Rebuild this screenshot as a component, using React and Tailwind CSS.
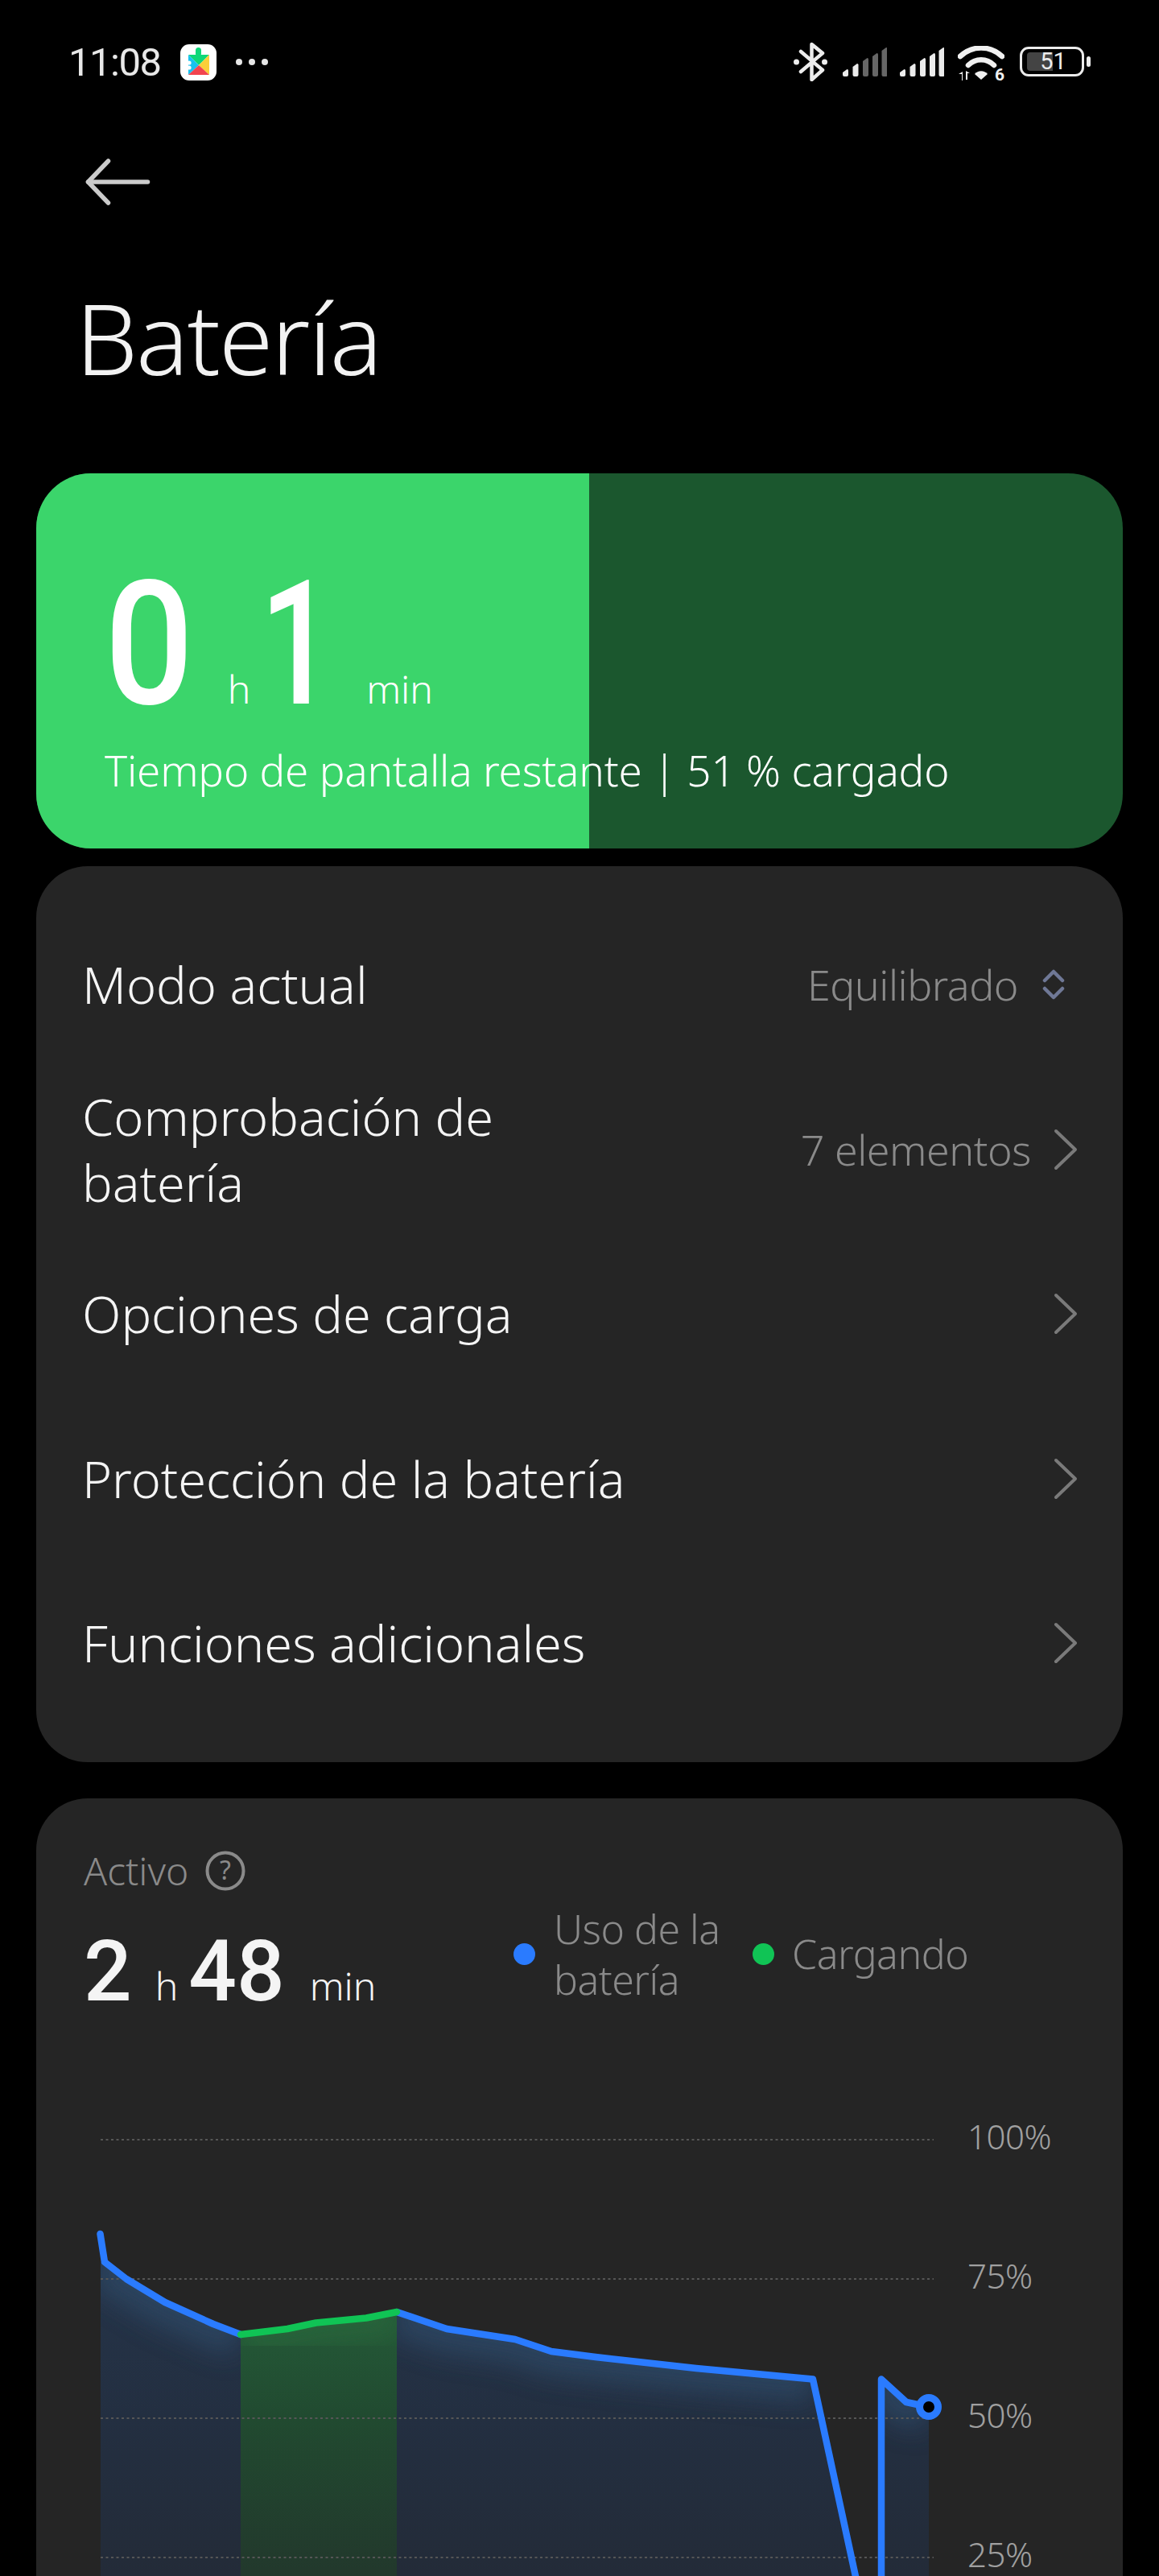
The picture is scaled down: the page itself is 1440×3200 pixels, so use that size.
const rows = [
  { label: ["Modo actual"], value: "Equilibrado", icon: "updown" },
  { label: ["Comprobación de", "batería"], value: "7 elementos", icon: "chevron" },
  { label: ["Opciones de carga"], icon: "chevron" },
  { label: ["Protección de la batería"], icon: "chevron" },
  { label: ["Funciones adicionales"], icon: "chevron" },
];

const signalBars = [
  { x: 0, top: 27 },
  { x: 12.5, top: 20 },
  { x: 25, top: 13 },
  { x: 37, top: 7 },
  { x: 48.5, top: 0 },
];

const chartLabels = [
  { text: "100%", className: "top-[-13px]" },
  { text: "75%", className: "top-[160px]" },
  { text: "50%", className: "top-[333px]" },
  { text: "25%", className: "top-[506px]" },
];

function PlayServicesIcon() {
  return (
    <svg width="45" height="45" viewBox="0 0 45 45">
      <rect width="45" height="45" rx="11" fill="#fff" />
      <rect x="19" y="4" width="7" height="11" rx="3.5" fill="#0ed878" />
      <path d="M10 13h26L23 26z" fill="#0ed878" />
      <path d="M10 13l13 13-13 12z" fill="#18c2ef" />
      <path d="M36 13v25L23 26z" fill="#fbcf3a" />
      <path d="M10 38l13-12 13 12z" fill="#f2444f" />
      <circle cx="11" cy="23" r="2.6" fill="#fff" />
      <circle cx="11" cy="29" r="2.6" fill="#fff" />
    </svg>
  );
}

function SignalIcon({ lit }) {
  return (
    <svg width="55" height="36" viewBox="0 0 55 36">
      {signalBars.map((bar, i) => (
        <path
          key={bar.x}
          d={`M${bar.x} ${bar.top + 4}L${bar.x + 5.5} ${bar.top}Q${bar.x + 7} ${bar.top} ${bar.x + 7} ${bar.top + 1.5}V34Q${bar.x + 7} 36 ${bar.x + 5} 36H${bar.x + 2}Q${bar.x} 36 ${bar.x} 34Z`}
          fill={i < lit ? "#ebebeb" : "#666666"}
        />
      ))}
    </svg>
  );
}

function StatusIcons() {
  return (
    <div className="flex h-[49px] items-center">
      <svg width="44" height="49" viewBox="0 0 44 49" fill="none" stroke="#ececec" strokeWidth="4.5" strokeLinejoin="round" strokeLinecap="round">
        <path d="M10 12l27 23-13.500 12V3L37 14 10 37" />
        <path d="M4.500 25h.01M39.500 25h.01" strokeWidth="7" />
      </svg>
      <div className="ml-[18px]">
        <SignalIcon lit={2} />
      </div>
      <div className="ml-[16px]">
        <SignalIcon lit={5} />
      </div>
      <svg width="58" height="48" viewBox="0 0 58 48" className="ml-[17px] mt-[8px]" fill="none">
        <path d="M3 13C18 -1 40 -1 55 13" stroke="#f0f0f0" strokeWidth="6.5" strokeLinecap="round" />
        <path d="M13 24C22 15 36 15 45 24" stroke="#f0f0f0" strokeWidth="6.5" strokeLinecap="round" />
        <path d="M21 35c4-5 12-5 16 0l-8 7z" fill="#f0f0f0" />
        <path d="M5 42v-8H1l5-3v11zM10 30l5 3h-3v8h-2z" fill="#f0f0f0" transform="translate(0 1)" />
        <text x="46" y="43" fontSize="21" fontWeight="700" fill="#f0f0f0" fontFamily="Roboto, sans-serif">6</text>
      </svg>
      <div className="ml-[19px] flex items-center gap-[3px]">
        <div className="relative h-[37px] w-[80px] rounded-[11px] border-[3px] border-[#ececec] py-[4px] pl-[6px]">
          <div className="h-full w-[32px] rounded-l-[4px] bg-[#444444]" />
          <span className="absolute inset-0 flex items-center justify-center pl-[3px] font-['Roboto',sans-serif] text-[29px] leading-none text-[#ececec]">51</span>
        </div>
        <div className="h-[13px] w-[5px] rounded-full bg-[#ececec]" />
      </div>
    </div>
  );
}

function UpDownIcon() {
  return (
    <svg width="28" height="40" viewBox="0 0 28 40" fill="none" stroke="#6f7896" strokeWidth="4.5" strokeLinecap="round" strokeLinejoin="round">
      <path d="M3 15L14 4l11 11" />
      <path d="M3 25l11 11 11-11" />
    </svg>
  );
}

function ChevronIcon() {
  return (
    <svg width="30" height="52" viewBox="0 0 30 52" fill="none" stroke="#7a7a7a" strokeWidth="4" strokeLinecap="round" strokeLinejoin="round">
      <path d="M3 3l24 23L3 49" />
    </svg>
  );
}

function SettingRow({ row }) {
  return (
    <div className="flex h-[204.5px] items-center justify-between pl-[57px] pr-[56px]">
      <div className="text-[63px] font-[350] leading-[82px] text-[#f4f4f4]">
        {row.label.map((line) => (
          <div key={line}>{line}</div>
        ))}
      </div>
      <div className="flex items-center">
        {row.value && <span className="text-[52px] font-[350] tracking-[-0.5px] text-[#8a8a8a]">{row.value}</span>}
        {row.icon === "updown" ? (
          <div className="ml-[30px] mr-[16px]">
            <UpDownIcon />
          </div>
        ) : (
          <div className="ml-[28px]">
            <ChevronIcon />
          </div>
        )}
      </div>
    </div>
  );
}

const firstLeg = "M125 2808L157 2829L205 2858L265 2885L299 2898";
const greenLeg = "M299 2898L357 2891L392.5 2883.5L455 2877.5L493 2870";
const secondLeg = "M493 2870L555 2891L640 2904L685 2919L740 2926L865 2940L1010 2953.6L1072 3240";
const thirdLeg = "M1095 3240V2953.6L1126 2982L1154 2988";

function BatteryChart() {
  return (
    <svg width="1351" height="560" viewBox="45 2640 1351 560" className="block">
      <defs>
        <linearGradient id="fadeBlue" gradientUnits="userSpaceOnUse" x1="0" y1="2800" x2="0" y2="3200">
          <stop offset="0" stopColor="#253449" />
          <stop offset="0.5" stopColor="#232f41" />
          <stop offset="1" stopColor="#232b38" />
        </linearGradient>
        <linearGradient id="fadeGreen" gradientUnits="userSpaceOnUse" x1="0" y1="2870" x2="0" y2="3200">
          <stop offset="0" stopColor="#245a38" />
          <stop offset="0.4" stopColor="#214a30" />
          <stop offset="1" stopColor="#22382c" />
        </linearGradient>
        <clipPath id="blueArea">
          <path d="M125 2808L157 2829L205 2858L265 2885L299 2898V3240H125Z" />
          <path d="M493 2870L555 2891L640 2904L685 2919L740 2926L865 2940L1010 2953.6L1072 3240H493Z" />
          <path d="M1095 2953.6L1126 2982L1154 2988V3240H1095Z" />
        </clipPath>
        <clipPath id="greenArea">
          <path d="M299 2898L357 2891L392.5 2883.5L455 2877.5L493 2870V3240H299Z" />
        </clipPath>
        <filter id="glow" x="-10%" y="-50%" width="120%" height="200%">
          <feGaussianBlur stdDeviation="16" />
        </filter>
      </defs>
      <rect x="125" y="2770" width="1030" height="430" fill="url(#fadeBlue)" clipPath="url(#blueArea)" />
      <rect x="299" y="2860" width="194" height="340" fill="url(#fadeGreen)" clipPath="url(#greenArea)" />
      <g clipPath="url(#blueArea)">
        <g fill="none" stroke="#2e4a66" strokeWidth="60" opacity="0.75" filter="url(#glow)">
          <path d={firstLeg} />
          <path d="M493 2870L555 2891L640 2904L685 2919L740 2926L865 2940L1010 2953.6" />
          <path d="M1095 2953.6L1126 2982L1154 2988" />
        </g>
      </g>
      <g clipPath="url(#greenArea)">
        <path d={greenLeg} fill="none" stroke="#2a6a3e" strokeWidth="60" opacity="0.6" filter="url(#glow)" />
      </g>
      <g stroke="#565656" strokeWidth="2" strokeDasharray="3 3.5">
        <path d="M125 2656H1160" />
        <path d="M125 2829H1160" />
        <path d="M125 3002H1160" />
        <path d="M125 3175H1160" />
      </g>
      <g fill="none" stroke="#2a7bff" strokeWidth="8.5" strokeLinejoin="round" strokeLinecap="round">
        <path d="M124.500 2773L130 2808L157 2829L205 2858L265 2885L299 2898" />
        <path d={secondLeg} />
        <path d={thirdLeg} />
      </g>
      <path d={greenLeg} fill="none" stroke="#10c455" strokeWidth="8.5" strokeLinecap="round" strokeLinejoin="round" />
      <circle cx="1154" cy="2988" r="11.5" fill="#000" stroke="#2a7bff" strokeWidth="9" />
    </svg>
  );
}

export default function App() {
  return (
    <div className="relative h-[3200px] w-[1440px] overflow-hidden bg-black font-['Noto_Sans','Roboto',sans-serif] text-white">
      <div className="flex h-[196px] items-start justify-between pl-[85px] pr-[85px] pt-[52px]">
        <div className="flex h-[50px] items-center">
          <span className="w-[139px] font-['Roboto',sans-serif] text-[49px] leading-[45px] tracking-[-1.5px] text-[#e8e8e8]">11:08</span>
          <PlayServicesIcon />
          <div className="ml-[24px] flex gap-[8px]">
            <div className="h-[8px] w-[8px] rounded-full bg-[#e6e6e6]" />
            <div className="h-[8px] w-[8px] rounded-full bg-[#e6e6e6]" />
            <div className="h-[8px] w-[8px] rounded-full bg-[#e6e6e6]" />
          </div>
        </div>
        <StatusIcons />
      </div>

      <div className="pl-[106px]">
        <svg width="82" height="60" viewBox="0 0 82 60" fill="none" stroke="#cbcbcb" strokeWidth="5.5" strokeLinecap="round" strokeLinejoin="round" className="block">
          <path d="M28.500 4L3.500 30l25 26" />
          <path d="M3.500 30h74" />
        </svg>
      </div>

      <h1 className="pl-[94px] pt-[83px] text-[122px] font-[350] leading-[160px] tracking-[-2px] text-[#f2f2f2]">Batería</h1>

      <div className="relative mx-[45px] mt-[89px] h-[466px] overflow-hidden rounded-[68px] bg-[#1b572e]">
        <div className="absolute inset-y-0 left-0 w-[687px] bg-[#3bd56b]" />
        <div className="relative pl-[85px] pt-[108px]">
          <div className="flex items-baseline">
            <span className="inline-block origin-left scale-x-[0.9] font-['Roboto',sans-serif] text-[216px] font-medium leading-[210px]">0</span>
            <span className="ml-[30px] text-[48px] font-[350]">h</span>
            <span className="ml-[12px] inline-block origin-left scale-x-[0.75] font-['Roboto',sans-serif] text-[216px] font-medium leading-[210px]">1</span>
            <span className="ml-[9px] text-[48px] font-[350]">min</span>
          </div>
          <div className="mt-[16px] whitespace-nowrap text-[53px] font-[350] leading-[70px] tracking-[-0.2px]">Tiempo de pantalla restante | 51 % cargado</div>
        </div>
      </div>

      <div className="mx-[45px] mt-[22px] rounded-[64px] bg-[#252525] py-[45px]">
        {rows.map((row) => (
          <SettingRow key={row.label[0]} row={row} />
        ))}
      </div>

      <div className="mx-[45px] mt-[45px] h-[1000px] rounded-t-[64px] bg-[#252525] pt-[60px]">
        <div className="flex h-[60px] items-center pl-[59px]">
          <span className="text-[48px] font-[350] leading-[60px] text-[#8a8a8a]">Activo</span>
          <svg width="50" height="50" viewBox="0 0 50 50" fill="none" className="ml-[21px]">
            <circle cx="25" cy="25" r="22.5" stroke="#8a8a8a" strokeWidth="4" />
            <text x="25" y="36" textAnchor="middle" fontSize="32" fill="#8a8a8a">?</text>
          </svg>
        </div>
        <div className="flex items-start pl-[59px] pt-[36px]">
          <div className="flex w-[534px] items-baseline text-[#f4f4f4]">
            <span className="font-['Roboto',sans-serif] text-[105px] font-medium leading-[120px]">2</span>
            <span className="ml-[29px] text-[48px] font-[350]">h</span>
            <span className="ml-[13px] font-['Roboto',sans-serif] text-[105px] font-medium leading-[120px]">48</span>
            <span className="ml-[31px] text-[48px] font-[350]">min</span>
          </div>
          <div className="-mt-[25px] flex h-[126px] items-center text-[50px] font-[350] leading-[63px] tracking-[-0.5px] text-[#8a8a8a]">
            <div className="h-[27px] w-[27px] rounded-full bg-[#2a7bff]" />
            <span className="ml-[23px] w-[247px]">Uso de la<br />batería</span>
            <div className="h-[27px] w-[27px] rounded-full bg-[#10c455]" />
            <span className="ml-[22px]">Cargando</span>
          </div>
        </div>
        <div className="relative mt-[132px]">
          <BatteryChart />
          {chartLabels.map((label) => (
            <span key={label.text} className={`absolute left-[1157px] text-[42px] font-[350] leading-[50px] tracking-[-0.5px] text-[#a0a0a0] ${label.className}`}>
              {label.text}
            </span>
          ))}
        </div>
      </div>
    </div>
  );
}
